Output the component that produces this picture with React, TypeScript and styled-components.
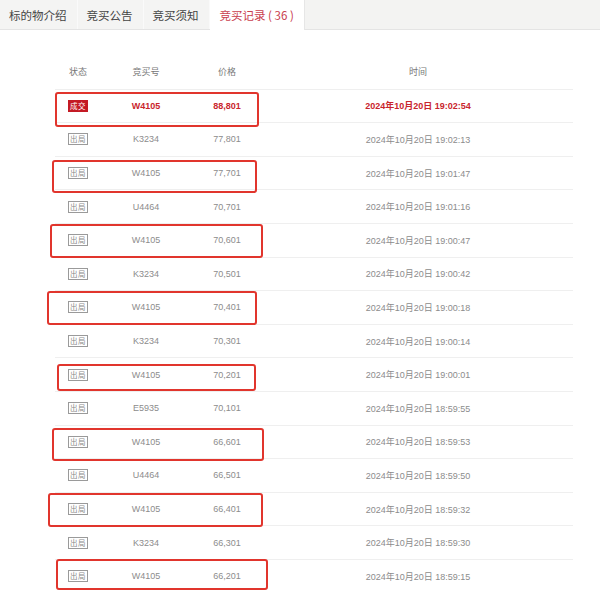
import React from "react";
import styled, { createGlobalStyle } from "styled-components";

const Global = createGlobalStyle`
  html, body { margin: 0; padding: 0; background: #fff; }
  body { font-family: "Liberation Sans", "Noto Sans CJK SC", Arial, sans-serif; }
`;

const Page = styled.div`
  width: 600px;
  height: 590px;
  overflow: hidden;
  background: #fff;
`;

const TabBar = styled.div`
  display: flex;
  height: 29px;
  background: #f3f3f2;
  border-bottom: 1px solid #e4e4e4;
`;

const Tab = styled.div<{ $active?: boolean }>`
  display: flex;
  align-items: center;
  padding: 0 10px 0 ${(p) => (p.$active ? 10 : 9)}px;
  height: ${(p) => (p.$active ? 30 : 29)}px;
  font-family: "Noto Sans CJK SC", "Liberation Sans", sans-serif;
  font-size: 11.5px;
  color: ${(p) => (p.$active ? "#c9404e" : "#444")};
  background: ${(p) => (p.$active ? "#fff" : "#f4f4f3")};
  border-right: 1px solid ${(p) => (p.$active ? "#e6e6e6" : "#fafafa")};
  box-sizing: border-box;
  white-space: nowrap;
`;

const Table = styled.div`
  margin: 25px 0 0 55px;
  width: 518px;
`;

const Row = styled.div<{ $head?: boolean }>`
  position: relative;
  display: grid;
  grid-template-columns: 46px 90px 72px 1fr;
  align-items: center;
  height: 33.6px;
  box-sizing: border-box;
  border-top: ${(p) => (p.$head ? "none" : "1px solid #efefef")};
`;

const Cell = styled.div<{ $red?: boolean; $head?: boolean }>`
  text-align: center;
  font-size: 9px;
  font-weight: ${(p) => (p.$red ? 700 : 400)};
  color: ${(p) => (p.$red ? "#c9252d" : p.$head ? "#777" : "#8c8c8c")};
  font-family: ${(p) =>
    p.$head ? `"Noto Sans CJK SC", sans-serif` : `"Liberation Sans", "Noto Sans CJK SC", Arial, sans-serif`};
  white-space: nowrap;
`;

const Tag = styled.span<{ $win?: boolean }>`
  display: inline-block;
  font-family: "Noto Sans CJK SC", sans-serif;
  font-size: 7.5px;
  line-height: 10px;
  padding: 0 1px;
  border: 1px solid ${(p) => (p.$win ? "#c41a24" : "#9a9a9a")};
  background: ${(p) => (p.$win ? "#c41a24" : "#fff")};
  color: ${(p) => (p.$win ? "#fff" : "#8a8a8a")};
  letter-spacing: 0.5px;
`;

const Mark = styled.div`
  position: absolute;
  z-index: 2;
  border: 2px solid #e1352d;
  border-radius: 3px;
  box-sizing: border-box;
  pointer-events: none;
`;

type Box = { l: number; t: number; w: number; h: number };
type Bid = { id: string; price: string; time: string; box?: Box };

const bids: Bid[] = [
  { id: "W4105", price: "88,801", time: "19:02:54", box: { l: 0, t: 2, w: 204, h: 35 } },
  { id: "K3234", price: "77,801", time: "19:02:13" },
  { id: "W4105", price: "77,701", time: "19:01:47", box: { l: -3, t: 3, w: 205, h: 33 } },
  { id: "U4464", price: "70,701", time: "19:01:16" },
  { id: "W4105", price: "70,601", time: "19:00:47", box: { l: -5, t: 0, w: 213, h: 34 } },
  { id: "K3234", price: "70,501", time: "19:00:42" },
  { id: "W4105", price: "70,401", time: "19:00:18", box: { l: -8, t: 0, w: 210, h: 34 } },
  { id: "K3234", price: "70,301", time: "19:00:14" },
  { id: "W4105", price: "70,201", time: "19:00:01", box: { l: 2, t: 6, w: 199, h: 27 } },
  { id: "E5935", price: "70,101", time: "18:59:55" },
  { id: "W4105", price: "66,601", time: "18:59:53", box: { l: -3, t: 2, w: 212, h: 33 } },
  { id: "U4464", price: "66,501", time: "18:59:50" },
  { id: "W4105", price: "66,401", time: "18:59:32", box: { l: -7, t: 0, w: 215, h: 34 } },
  { id: "K3234", price: "66,301", time: "18:59:30" },
  { id: "W4105", price: "66,201", time: "18:59:15", box: { l: 1, t: -1, w: 212, h: 31 } },
];

export default function App() {
  return (
    <Page>
      <Global />
      <TabBar>
        <Tab>标的物介绍</Tab>
        <Tab>竞买公告</Tab>
        <Tab>竞买须知</Tab>
        <Tab $active>竞买记录 ( 36 )</Tab>
      </TabBar>
      <Table>
        <Row $head>
          <Cell $head>状态</Cell>
          <Cell $head>竞买号</Cell>
          <Cell $head>价格</Cell>
          <Cell $head>时间</Cell>
        </Row>
        {bids.map((b, i) => {
          const win = i === 0;
          return (
            <Row key={i}>
              <Cell>
                <Tag $win={win}>{win ? "成交" : "出局"}</Tag>
              </Cell>
              <Cell $red={win}>{b.id}</Cell>
              <Cell $red={win}>{b.price}</Cell>
              <Cell $red={win}>2024年10月20日 {b.time}</Cell>
              {b.box && (
                <Mark
                  style={{ left: b.box.l, top: b.box.t, width: b.box.w, height: b.box.h }}
                />
              )}
            </Row>
          );
        })}
      </Table>
    </Page>
  );
}
